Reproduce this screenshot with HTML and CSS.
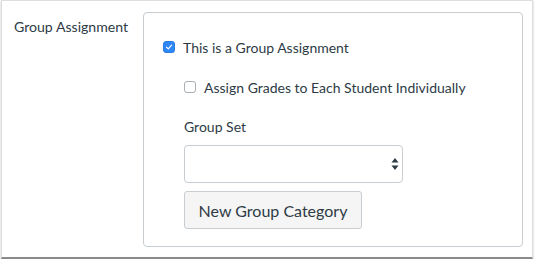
FILE: index.html
```html
<!DOCTYPE html>
<html>
<head>
<meta charset="utf-8">
<link rel="stylesheet" href="styles.css">
</head>
<body>
<div class="frame">
  <div class="row">
    <div class="label">Group Assignment</div>
    <div class="panel">
      <label class="check-line">
        <span class="cb cb-on">
          <svg viewBox="0 0 14 14" width="14" height="14"><path d="M3.6 7.3 L6 9.6 L10.6 4.4" fill="none" stroke="#fff" stroke-width="1.6" stroke-linecap="round" stroke-linejoin="round"/></svg>
        </span>
        <span>This is a Group Assignment</span>
      </label>
      <div class="sub">
        <label class="check-line">
          <span class="cb cb-off"></span>
          <span>Assign Grades to Each Student Individually</span>
        </label>
        <div class="field-label">Group Set</div>
        <div class="select">
          <svg class="arrows" viewBox="0 0 8 14" width="8" height="14"><path d="M4 1 L7.5 5.5 L0.5 5.5 Z M4 13 L7.5 8.5 L0.5 8.5 Z" fill="#2d3b45"/></svg>
        </div>
        <button class="btn">New Group Category</button>
      </div>
    </div>
  </div>
</div>
</body>
</html>
```

FILE: styles.css
```css
html, body {
  margin: 0;
  padding: 0;
  background: #fff;
}
body {
  font-family: Lato, "Liberation Sans", sans-serif;
  color: #2d3b45;
  font-size: 14px;
}
.frame {
  margin-left: 1px;
  width: 532px;
  height: 259px;
  border: 1px solid #dedede;
  border-bottom: 2px solid #8a8a8a;
  box-sizing: border-box;
  box-shadow: 0 1px 2px rgba(0,0,0,0.25);
}
.row {
  display: flex;
  padding: 11px 0 0 12px;
}
.label {
  width: 129px;
  padding-top: 6px;
  font-size: 14.1px;
}
.panel {
  width: 380px;
  height: 235px;
  box-sizing: border-box;
  border: 1px solid #c7cdd1;
  border-radius: 4px;
  padding: 27px 0 0 19px;
}
.check-line {
  display: flex;
  align-items: center;
  gap: 8px;
  font-size: 14px;
  height: 14px;
}
.cb {
  width: 12px;
  height: 12px;
  border-radius: 3px;
  box-sizing: border-box;
  display: inline-flex;
  align-items: center;
  justify-content: center;
}
.cb-on {
  background: #2f86f5;
  border: 1px solid #2a7de6;
}
.cb-on svg { width: 12px; height: 12px; }
.cb-off {
  background: #fff;
  border: 1px solid #a9b0b5;
}
.sub {
  padding-left: 21px;
  padding-top: 26px;
}
.field-label {
  margin-top: 24px;
  font-size: 14px;
  line-height: 17px;
}
.select {
  margin-top: 10px;
  width: 219px;
  height: 38px;
  box-sizing: border-box;
  border: 1px solid #c7cdd1;
  border-radius: 4px;
  display: flex;
  align-items: center;
  justify-content: flex-end;
  padding-right: 3px;
}
.btn {
  margin-top: 8px;
  width: 178px;
  height: 38px;
  background: #f5f5f5;
  border: 1px solid #c7cdd1;
  border-radius: 3px;
  font-family: Lato, "Liberation Sans", sans-serif;
  font-size: 16px;
  color: #2d3b45;
  padding: 0;
}
```
